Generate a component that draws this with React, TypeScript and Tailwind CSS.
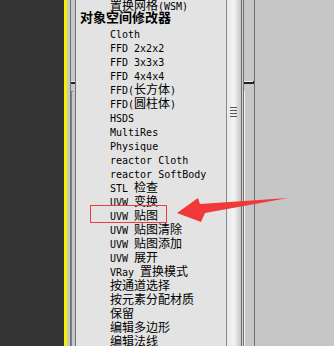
import React from 'react'

const items = [
  '置换网格(WSM)',
  '#对象空间修改器',
  'Cloth',
  'FFD 2x2x2',
  'FFD 3x3x3',
  'FFD 4x4x4',
  'FFD(长方体)',
  'FFD(圆柱体)',
  'HSDS',
  'MultiRes',
  'Physique',
  'reactor Cloth',
  'reactor SoftBody',
  'STL 检查',
  'UVW 变换',
  'UVW 贴图',
  'UVW 贴图清除',
  'UVW 贴图添加',
  'UVW 展开',
  'VRay 置换模式',
  '按通道选择',
  '按元素分配材质',
  '保留',
  '编辑多边形',
  '编辑法线',
]

const cjk = /([\u3400-\u9fff]+)/

function Label({ text }: { text: string }) {
  const parts = text.split(cjk).filter(Boolean)
  return (
    <>
      {parts.map((p, i) =>
        cjk.test(p) ? (
          <span key={i} className="text-[12px] leading-none font-['Noto_Sans_CJK_SC',sans-serif]">
            {p}
          </span>
        ) : (
          <span key={i} className="text-[10px] leading-none font-['DejaVu_Sans_Mono',monospace] whitespace-pre">
            {p}
          </span>
        )
      )}
    </>
  )
}

export default function App() {
  return (
    <div className="relative flex h-[346px] w-[334px] overflow-hidden bg-[#c8c8c8]">
      {/* viewport edge */}
      <div className="w-[64px] shrink-0 bg-[#333333]" />
      <div className="w-[3px] shrink-0 bg-[#f5ef00]" />
      <div className="w-[3px] shrink-0 bg-[#c8c8c8]" />
      <div className="w-[1px] shrink-0 bg-[#707070]" />
      <div className="flex w-[4px] shrink-0 flex-col bg-[#c8c8c8]">
        <div className="mt-[81px] h-[4px] w-[4px] border-b-2 border-[#202020] bg-[#f0f0f0]" />
        <div className="mt-[7px] h-full w-[2px] border-l border-t border-[#808080]" />
      </div>
      <div className="w-[1px] shrink-0 bg-[#707070]" />

      {/* modifier list */}
      <div className="w-[150px] shrink-0 bg-[#e3e3e3] text-black">
        <div className="-mt-[4px]">
          {items.map((t) =>
            t.startsWith('#') ? (
              <div
                key={t}
                className="h-[14px] pl-[4px] text-[13px] font-bold leading-[14px] font-['Noto_Sans_CJK_SC',sans-serif]"
              >
                {t.slice(1)}
              </div>
            ) : (
              <div key={t} className="h-[14px] whitespace-nowrap pl-[34px] pt-[1px] leading-[14px]">
                <Label text={t} />
              </div>
            )
          )}
        </div>
      </div>

      {/* scrollbar */}
      <div className="w-[1px] shrink-0 bg-[#8a8a8a]" />
      <div className="relative w-[14px] shrink-0 bg-gradient-to-r from-[#e8e8e8] via-[#f4f4f4] to-[#c4c4c4]">
        <div className="absolute left-[3px] top-[107px] flex w-[7px] flex-col gap-[2px]">
          <div className="h-[1px] bg-[#555]" />
          <div className="h-[1px] bg-[#555]" />
          <div className="h-[1px] bg-[#555]" />
          <div className="h-[1px] bg-[#555]" />
        </div>
      </div>
      <div className="w-[1px] shrink-0 bg-[#707070]" />
      <div className="w-[1px] shrink-0 bg-[#d0d0d0]" />
      <div className="w-[1px] shrink-0 bg-[#707070]" />
      <div className="flex w-[10px] shrink-0 flex-col bg-[#c8c8c8]">
        <div className="mt-[81px] h-[4px] w-[10px] border-b-2 border-r border-[#202020] bg-[#f0f0f0]" />
        <div className="mt-[7px] h-full w-[2px] border-l border-[#f4f4f4]" />
      </div>
      <div className="w-[1px] shrink-0 bg-[#707070]" />
      <div className="flex-1 bg-[#c6c6c6]" />

      {/* annotation */}
      <div className="absolute left-[90px] top-[205px] h-[18px] w-[77px] border border-[#e8403c]" />
      <svg className="absolute left-0 top-0" width="334" height="346" viewBox="0 0 334 346">
        <polygon
          points="177,213 198,198 200,204 288,198 205,213 201,222"
          fill="#f2393a"
        />
      </svg>
    </div>
  )
}
